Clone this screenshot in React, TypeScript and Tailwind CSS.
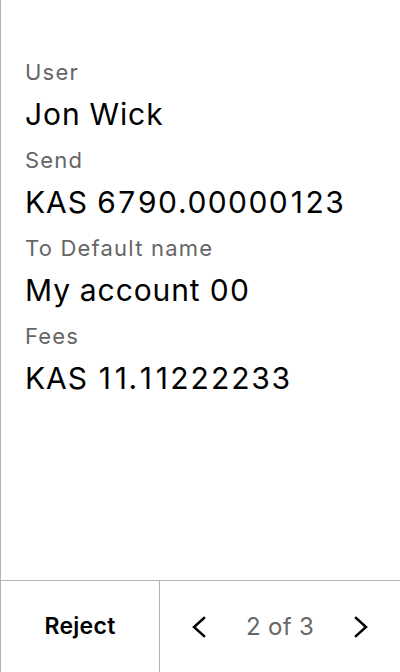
import React from "react";

const fields = [
  { label: "User", value: "Jon Wick" },
  { label: "Send", value: "KAS 6790.00000123" },
  { label: "To Default name", value: "My account 00" },
  { label: "Fees", value: "KAS 11.11222233" },
];

function Value({ text }: { text: string }) {
  const parts = text.split(/(1)/);
  return (
    <>
      {parts.map((p, i) =>
        p === "1" ? (
          <span key={i} className="inline-block w-[16px] text-center normal-nums tracking-normal">
            1
          </span>
        ) : (
          <React.Fragment key={i}>{p}</React.Fragment>
        )
      )}
    </>
  );
}

export default function App() {
  return (
    <div
      className="w-[400px] h-[672px] flex flex-col bg-white border-l border-[#b3b3b3] text-black"
      style={{ fontFamily: "Inter, 'Noto Sans', sans-serif" }}
    >
      <div className="flex-1 flex flex-col pt-[58px] pl-[24px] gap-[12px]">
        {fields.map((f) => (
          <div key={f.label} className="flex flex-col gap-[8px]">
            <div className="h-[28px] leading-[28px] text-[22px] tracking-[1.2px] text-[#666666] whitespace-nowrap">
              {f.label}
            </div>
            <div className="h-[40px] leading-[40px] text-[30px] tracking-[0.9px] tabular-nums text-black whitespace-nowrap">
              <Value text={f.value} />
            </div>
          </div>
        ))}
      </div>
      <div className="h-[92px] flex border-t border-[#b3b3b3]">
        <div className="w-[159px] flex items-center justify-center border-r border-[#b3b3b3] text-[23px] tracking-[0.3px] font-semibold">
          Reject
        </div>
        <div className="flex-1 flex items-center justify-between px-[31px]">
          <svg width="16" height="22" viewBox="0 0 16 22" fill="none" stroke="black" strokeWidth="2.5" strokeLinecap="square">
            <path d="M13 2 L3 11 L13 20" />
          </svg>
          <span className="text-[24px] tracking-[0.3px] text-[#666666]">2 of 3</span>
          <svg width="16" height="22" viewBox="0 0 16 22" fill="none" stroke="black" strokeWidth="2.5" strokeLinecap="square">
            <path d="M3 2 L13 11 L3 20" />
          </svg>
        </div>
      </div>
    </div>
  );
}
